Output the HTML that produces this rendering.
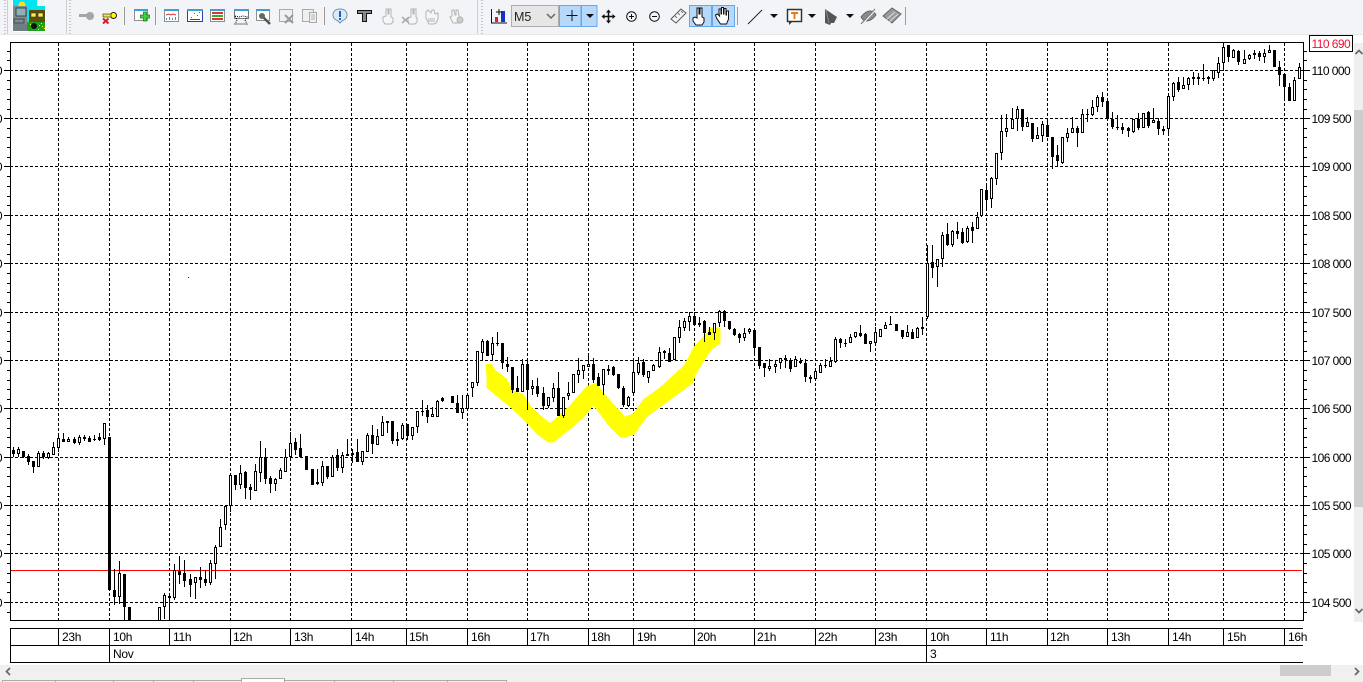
<!DOCTYPE html>
<html><head><meta charset="utf-8"><title>Chart</title>
<style>
html,body{margin:0;padding:0;background:#fff;width:1363px;height:682px;overflow:hidden}
svg{display:block;position:absolute;left:0;top:0}
text{font-family:"Liberation Sans",sans-serif;font-size:12px;fill:#000}
.p{letter-spacing:-.55px}
.t{letter-spacing:-.3px}
</style></head><body>
<svg width="1363" height="682" viewBox="0 0 1363 682" xmlns="http://www.w3.org/2000/svg">
<defs><clipPath id="c"><rect x="10" y="42" width="1293" height="578"/></clipPath></defs>
<rect width="1363" height="34" fill="#f3f4f7"/>
<rect y="34" width="1363" height="1" fill="#e7e8ea"/>

<!-- grips and separators -->
<g fill="none" stroke="#c6c6c6" stroke-width="2" stroke-dasharray="1 2">
<path d="M5 0V34M70 0V34M482 0V34"/></g>
<path d="M66.500 0V34M7.500 0V34M477.500 0V34" stroke="#cfcfcf" fill="none"/>
<path d="M124.500 7V25M155.500 7V25M324.500 7V25M737.500 7V25M905.500 7V25" stroke="#9b9b9b" fill="none"/>

<!-- logo -->
<rect x="12" y="0" width="34" height="32" fill="#fff"/>
<rect x="13" y="0" width="32" height="31" fill="#00e3f2"/>
<circle cx="22" cy="5" r="3.500" fill="#f5e11e"/>
<rect x="37" y="0" width="8" height="6" fill="#eef4f4"/>
<rect x="13" y="6" width="14" height="25" fill="#7f8b8f"/>
<rect x="16" y="8" width="10" height="8" fill="#8fb0b4" stroke="#2f4a50"/>
<rect x="14" y="19" width="10" height="4" fill="none" stroke="#3c4c50"/>
<rect x="13" y="24" width="16" height="7" fill="#6d7f82"/>
<rect x="27" y="22" width="18" height="9" fill="#1f9e1f"/>
<rect x="29" y="10" width="16" height="12" fill="#5f5008"/>
<rect x="31" y="13" width="5" height="4" fill="#f3ee55" stroke="#222" stroke-width=".5"/><rect x="38" y="13" width="5" height="4" fill="#f3ee55" stroke="#222" stroke-width=".5"/>
<circle cx="34" cy="26" r="3" fill="#111"/>
<path d="M39 25h1v1h-1zM42 26h1v1h-1zM41 23h1v1h-1zM44 28h1v1h-1zM38 29h1v1h-1zM30 24h1v1h-1z" fill="#ff0"/>

<!-- keys -->
<circle cx="90" cy="16" r="4" fill="#a6a6a6"/><rect x="79" y="14" width="8" height="3" fill="#a6a6a6"/>
<circle cx="113.500" cy="15.500" r="3" fill="#ff0" stroke="#222"/><rect x="103" y="14" width="8" height="3" fill="#ee3" stroke="#222" stroke-width=".6"/>
<path d="M103 18.500l5.500 5M108.500 18.500l-5.500 5" stroke="#d52020" stroke-width="2" fill="none"/>

<!-- window icons -->
<g fill="#fff" stroke="#8f8f8f">
<rect x="134.500" y="9.500" width="13" height="11"/>
<rect x="164.500" y="9.500" width="14" height="12"/>
<rect x="187.500" y="9.500" width="15" height="12" stroke="#2a3fb0"/>
<rect x="210.500" y="9.500" width="14" height="12"/>
<rect x="234.500" y="9.500" width="14" height="9" stroke="#777"/>
<rect x="256.500" y="9.500" width="13" height="11"/>
<rect x="279.500" y="9.500" width="13" height="12" fill="#f0f0f0" stroke="#aaa"/>
<rect x="302.500" y="9.500" width="11" height="12" fill="#f0f0f0" stroke="#aaa"/>
<rect x="309.500" y="12.500" width="7" height="10" fill="#eee" stroke="#aaa"/>
</g>
<g fill="#3c9fd6"><rect x="134" y="9" width="14" height="2"/><rect x="164" y="9" width="15" height="2"/><rect x="187" y="9" width="16" height="2"/><rect x="210" y="9" width="15" height="2"/><rect x="234" y="9" width="15" height="2"/><rect x="256" y="9" width="14" height="2"/></g>
<path d="M141 14h3v-3h3v3h3v3h-3v3h-3v-3h-3z" transform="translate(-.5 1)" fill="#3dd23d" stroke="#1b7f1b" stroke-width=".8"/>
<path d="M166 15l3-1 2 1 2-1 3 1" stroke="#d33" fill="none"/>
<path d="M166.500 20v-2M169.500 20v-3M172.500 20v-2M175.500 20v-3" stroke="#3a8fd8" fill="none"/>
<path d="M191 17h1v1h-1zM194 13h1v1h-1zM197 15h1v1h-1zM199 12h1v1h-1z" fill="#d33"/>
<rect x="190" y="19" width="10" height="1" fill="#2a3fb0"/>
<rect x="212" y="12" width="11" height="2" fill="#d63a2a"/><rect x="212" y="15" width="11" height="2" fill="#3aa83a"/><rect x="212" y="18" width="11" height="2" fill="#d63a2a"/>
<path d="M235 16l4 1 4-1 4 1-2 3 2 4h-12l2-4z" fill="none" stroke="#000" stroke-dasharray="1 1"/>
<path d="M262 16l8 8" stroke="#555" stroke-width="2.500" fill="none"/><circle cx="262" cy="16" r="3" fill="#666"/>
<path d="M285 15l8 8M293 15l-8 8" stroke="#999" stroke-width="2" fill="none"/>
<path d="M311 15h4M311 17h4M311 19h4" stroke="#bbb" fill="none"/>

<!-- info, T -->
<path d="M340 9c4.500 0 7 2.500 7 6s-3 5-5 6l-2 2-2-2c-2-1-5-2.500-5-6s2.500-6 7-6z" fill="#dbeaf8" stroke="#6c8fae"/>
<rect x="339" y="11" width="2" height="6" fill="#1560c0"/><rect x="339" y="18" width="2" height="2" fill="#1560c0"/>
<path d="M357.500 10.500h14v3h-5v8h-4v-8h-5z" fill="#8a8a8a" stroke="#111"/>

<!-- gray hands -->
<g fill="#f6f6f6" stroke="#b4b4b4">
<path d="M386 9h2v5h1V9h2v8l2 1v4l-2 2h-6l-2-3v-4l3-1z"/>
<path d="M411 9h2v5h1V9h2v8l1 1v4l-2 2h-6l-1-3v-3l3-1z"/><path d="M402 17l7 6M409 17l-7 6" stroke="#aaa" stroke-width="1.500"/>
<path d="M426 12l2-2 3 3 1-3 2 0 1 4 3-1v6l-2 4-2 1h-5l-3-6z"/><path d="M428 19h7M428 21h7" fill="none"/>
<path d="M450 17l2-1V10h2l1 5h1V10h2l1 6 2 2-1 5h-7z"/><circle cx="460" cy="20" r="3" fill="#ccc"/>
</g>

<!-- chart icon -->
<path d="M491.500 9v14H507" stroke="#111" fill="none"/>
<rect x="495" y="17" width="3" height="5" fill="#e02020"/><rect x="501" y="11" width="4" height="11" fill="#1530c8"/>
<path d="M499 9v6M496 12h6" stroke="#111" fill="none"/>

<!-- combo -->
<rect x="511.500" y="5.500" width="47" height="21" fill="#e6e6e6" stroke="#adadad"/>
<text x="514" y="21" style="font-size:12.500px;fill:#222">M5</text>
<path d="M547 14l4 4 4-4" stroke="#666" stroke-width="1.500" fill="none"/>

<!-- blue buttons -->
<g fill="#b6d8fb" stroke="#66a7e8">
<rect x="559.500" y="5.500" width="21.500" height="21"/>
<rect x="581.500" y="5.500" width="15.500" height="21"/>
<rect x="689.500" y="5.500" width="22" height="21"/>
<rect x="712.500" y="5.500" width="22" height="21"/>
</g>
<path d="M572 10v11M566.500 15.500h11" stroke="#111" fill="none"/>
<path d="M586 14h8l-4 4z" fill="#111"/>

<!-- move, zoom, ruler -->
<path d="M608.500 11v11M603 16.500h11" stroke="#111" stroke-width="1.500" fill="none"/>
<path d="M608.500 9.500l2.500 3h-5zM608.500 23.500l2.500-3h-5zM601.500 16.500l3-2.500v5zM615.500 16.500l-3-2.500v5z" fill="#111"/>
<circle cx="631.500" cy="16.500" r="4.800" fill="none" stroke="#111"/><path d="M629 16.500h5M631.500 14v5" stroke="#111" fill="none"/>
<circle cx="654.500" cy="16.500" r="4.800" fill="none" stroke="#111"/><path d="M652 16.500h5" stroke="#111" fill="none"/>
<path d="M671 19l10-10 5 4-10 10z" fill="#f6f6f6" stroke="#555"/><path d="M675 16l2 2M678 13l2 2M681 11l2 2" stroke="#777" fill="none"/>

<!-- hands active -->
<path d="M697 8h2v6h1V8h2v9l2 1v4l-2 3h-6l-3-4v-3l2-1 2 1z" fill="#fff" stroke="#111"/>
<path d="M719 13l0-4h2v5h.5V7.500h2V14h.5V8.500h2V15h.5v-4h2v8l-2 5h-6l-4-6-1-3 2-1 2 2z" fill="#fff" stroke="#111"/>

<!-- line, comment, arrows -->
<path d="M748 24l14-14" stroke="#222" fill="none"/>
<path d="M770 14h8l-4 4zM808 14h8l-4 4zM846 14h8l-4 4z" fill="#111"/>
<rect x="787.500" y="9.500" width="14" height="12" fill="#fff" stroke="#333" stroke-width="1.500"/>
<path d="M789 22v3l3-3z" fill="#333"/>
<path d="M791 12h7v2h-2.500v5h-2v-5H791z" fill="#f07810"/>
<path d="M825 9l12 8-3 6h-3l-1 2-5-2z" fill="#555"/><path d="M826 10l3 13" stroke="#888" fill="none"/>
<path d="M861 17c3-4 6-6 9-6s5 2 6 4c-3 4-6 6-9 6s-5-2-6-4z" fill="#8a8a8a" stroke="#666"/>
<path d="M862 24l13-14" stroke="#f3f4f7" stroke-width="2" fill="none"/><path d="M861 24l14-15" stroke="#777" fill="none"/>
<path d="M883 16l9-8 9 6-9 9z" fill="#999" stroke="#666"/><path d="M886 20l9-8M889 22l9-8" stroke="#ddd" fill="none"/>

<!-- scrollbars -->
<rect x="1354" y="43" width="9" height="579" fill="#efefef"/>
<rect x="1354" y="110" width="9" height="397" fill="#cdcdcd"/>
<path d="M1355.500 54l3.500-3.500 3.500 3.500" stroke="#6b6b6b" stroke-width="1.800" fill="none"/>
<path d="M1355.500 609l3.500 3.500 3.500-3.500" stroke="#6b6b6b" stroke-width="1.800" fill="none"/>
<rect x="0" y="665" width="1363" height="17" fill="#f0f0f0"/>
<rect x="1280" y="665" width="51" height="11" fill="#cdcdcd"/>
<path d="M10 668l-3.500 3.500 3.500 3.500" stroke="#6b6b6b" stroke-width="1.800" fill="none"/>
<path d="M1355 668l3.500 3.500-3.500 3.500" stroke="#6b6b6b" stroke-width="1.800" fill="none"/>
<!-- tabs -->
<path d="M2.500 682v-1.500H506.500V682M55.500 680v2M113.500 680v2M153.500 680v2M193.500 680v2M334.500 680v2M393.500 680v2M447.500 680v2" fill="none" stroke="#ababab"/>
<rect x="241.500" y="678.500" width="43" height="5" fill="#fff" stroke="#ababab"/>

<!-- chart -->
<g shape-rendering="crispEdges">
<g fill="none" stroke="#000" stroke-dasharray="3 2">
<path d="M10 70.500H1303M10 118.500H1303M10 166.500H1303M10 215.500H1303M10 263.500H1303M10 312.500H1303M10 360.500H1303M10 408.500H1303M10 457.500H1303M10 505.500H1303M10 553.500H1303M10 602.500H1303"/>
<path d="M58.500 43V620M109.500 43V620M169.500 43V620M230.500 43V620M290.500 43V620M351.500 43V620M406.500 43V620M467.500 43V620M527.500 43V620M588.500 43V620M633.500 43V620M694.500 43V620M754.500 43V620M815.500 43V620M875.500 43V620M926.500 43V620M986.500 43V620M1047.500 43V620M1107.500 43V620M1168.500 43V620M1223.500 43V620M1284.500 43V620"/>
</g>
<polygon transform="translate(470 300) scale(.33333)" fill="#ffff00" points="48,192 65,192 78,212 110,235 130,272 160,282 185,322 240,370 300,316 350,258 380,248 400,278 435,316 465,350 490,340 520,298 570,262 640,198 655,172 670,142 710,98 720,82 752,82 752,130 725,148 678,222 668,250 592,306 532,350 492,404 470,412 450,412 420,382 370,317 340,354 300,388 250,428 235,428 200,402 170,368 130,330 50,264"/>
<rect x="188" y="277" width="1" height="1" fill="#2020d0"/>
<rect x="10" y="570" width="1292" height="1" fill="#ff0000"/>

<g clip-path="url(#c)">
<!-- wicks -->
<path fill="none" stroke="#000" d="M13.500 447V457M18.500 447V457M23.500 451V458M28.500 454V465M33.500 461V473M38.500 451V467M43.500 451V459M48.500 452V459M53.500 442V455M58.500 433V452M63.500 433V442M68.500 437V442M74.500 437V444M79.500 435V445M84.500 435V441M89.500 436V442M94.500 435V441M99.500 433V441M104.500 423V445M114.500 569V605M119.500 561V604M124.500 574V620M164.500 593V619M169.500 596V620M174.500 564V600M179.500 556V584M184.500 560V587M190.500 574V597M195.500 577V599M200.500 567V588M205.500 570V586M210.500 560V585M215.500 545V579M220.500 519V547M225.500 506V530M230.500 473V512M235.500 475V490M240.500 465V489M245.500 471V499M250.500 484V500M255.500 464V491M260.500 441V482M265.500 448V484M270.500 476V493M275.500 478V491M280.500 468V479M285.500 449V472M290.500 432V457M295.500 438V455M300.500 434V457M312.500 469V485M317.500 469V485M322.500 461V486M327.500 466V479M332.500 455V477M337.500 449V471M342.500 452V473M347.500 439V456M352.500 449V463M357.500 439V462M362.500 451V465M367.500 433V452M372.500 425V454M377.500 429V445M382.500 416V436M387.500 421V433M392.500 421V444M397.500 432V446M402.500 423V440M407.500 424V440M412.500 427V440M417.500 411V433M422.500 400V416M427.500 405V423M432.500 407V417M437.500 400V417M442.500 397V402M457.500 395V413M462.500 395V419M467.500 395V410M472.500 382V397M477.500 351V386M482.500 339V361M487.500 340V356M492.500 337V360M497.500 332V346M502.500 343V369M507.500 357V372M512.500 367V393M517.500 376V392M522.500 359V392M527.500 359V410M532.500 380V395M537.500 378V397M543.500 387V410M548.500 397V408M553.500 383V402M558.500 372V416M563.500 397V418M568.500 382V400M578.500 358V383M583.500 365V379M588.500 353V367M593.500 358V383M598.500 373V386M603.500 369V395M608.500 365V375M613.500 366V376M618.500 374V389M623.500 386V407M628.500 396V407M633.500 360V393M638.500 357V375M643.500 359V377M648.500 371V383M653.500 364V371M659.500 347V368M664.500 350V359M669.500 348V362M679.500 320V343M684.500 318V331M689.500 312V331M694.500 312V325M699.500 317V327M704.500 320V342M709.500 327V335M714.500 323V340M719.500 310V327M724.500 310V327M729.500 321V330M734.500 328V336M739.500 333V343M744.500 328V341M749.500 328V334M754.500 330V356M759.500 347V369M764.500 363V377M769.500 359V371M775.500 360V373M780.500 358V369M785.500 355V368M790.500 358V372M795.500 356V367M800.500 358V364M805.500 359V382M810.500 375V383M815.500 370V381M820.500 363V373M825.500 359V368M830.500 357V367M835.500 337V363M840.500 338V348M845.500 339V347M850.500 334V343M855.500 332V338M860.500 325V337M865.500 333V344M870.500 341V352M875.500 327V343M880.500 329V337M885.500 322V329M890.500 316V325M902.500 330V339M907.500 325V337M912.500 329V339M917.500 327V338M922.500 317V335M927.500 245V319M932.500 245V278M937.500 259V287M942.500 232V267M947.500 223V246M952.500 230V247M957.500 222V239M962.500 228V244M967.500 226V243M972.500 222V243M977.500 212V229M981.500 189V217M986.500 184V210M991.500 177V208M996.500 153V185M1001.500 115V160M1006.500 114V137M1012.500 108V129M1017.500 106V131M1022.500 109V131M1027.500 117V127M1032.500 123V142M1037.500 127V139M1042.500 121V142M1047.500 120V137M1052.500 137V169M1057.500 145V167M1062.500 137V164M1067.500 128V142M1072.500 117V133M1077.500 126V147M1082.500 109V133M1087.500 109V122M1092.500 100V116M1097.500 95V112M1102.500 92V107M1107.500 101V121M1112.500 112V129M1117.500 115V130M1122.500 123V134M1128.500 127V137M1133.500 119V133M1138.500 113V130M1143.500 113V128M1148.500 111V128M1153.500 108V123M1158.500 118V135M1163.500 126V135M1168.500 96V133M1173.500 82V101M1178.500 77V92M1183.500 77V89M1188.500 77V90M1193.500 72V85M1198.500 73V85M1203.500 64V81M1208.500 76V84M1213.500 70V81M1218.500 57V78M1223.500 45V68M1228.500 45V62M1233.500 49V58M1238.500 50V65M1244.500 50V64M1249.500 54V60M1254.500 50V59M1259.500 51V61M1264.500 49V63M1269.500 45V53M1274.500 50V67M1279.500 61V86M1284.500 74V98M1289.500 83V101M1294.500 77V101M1299.500 63V79"/>
<!-- black bodies -->
<path fill="#000" d="M12 450h3V454h-3zM22 451h3V457h-3zM27 456h3V462h-3zM32 461h3V467h-3zM42 453h3V457h-3zM62 439h3V442h-3zM73 439h3V443h-3zM83 437h3V439h-3zM88 438h3V442h-3zM93 439h3V440h-3zM98 437h3V440h-3zM108 437h3V590h-3zM113 590h3V597h-3zM123 574h3V607h-3zM128 607h3V620h-3zM168 596h3V598h-3zM178 571h3V575h-3zM183 573h3V581h-3zM189 579h3V585h-3zM199 577h3V580h-3zM204 579h3V583h-3zM234 475h3V485h-3zM244 472h3V488h-3zM249 487h3V490h-3zM264 457h3V479h-3zM269 478h3V484h-3zM294 442h3V450h-3zM299 448h3V457h-3zM305 456h3V470h-3zM311 469h3V485h-3zM316 482h3V484h-3zM326 466h3V477h-3zM336 455h3V468h-3zM346 454h3V456h-3zM351 453h3V455h-3zM356 452h3V462h-3zM371 435h3V444h-3zM386 421h3V423h-3zM391 421h3V441h-3zM396 439h3V441h-3zM406 424h3V436h-3zM421 411h3V412h-3zM426 410h3V417h-3zM441 398h3V401h-3zM451 396h3V403h-3zM456 403h3V413h-3zM486 341h3V356h-3zM496 343h3V344h-3zM501 343h3V363h-3zM506 364h3V367h-3zM511 367h3V390h-3zM516 388h3V392h-3zM526 364h3V390h-3zM536 386h3V394h-3zM542 393h3V406h-3zM557 388h3V416h-3zM592 364h3V380h-3zM597 377h3V386h-3zM607 369h3V371h-3zM612 367h3V375h-3zM617 374h3V388h-3zM622 388h3V405h-3zM642 362h3V375h-3zM663 351h3V353h-3zM668 353h3V362h-3zM693 316h3V325h-3zM703 321h3V333h-3zM708 332h3V335h-3zM723 311h3V321h-3zM728 321h3V329h-3zM733 329h3V335h-3zM738 334h3V338h-3zM753 330h3V348h-3zM758 347h3V366h-3zM763 363h3V368h-3zM784 358h3V360h-3zM789 360h3V369h-3zM799 361h3V363h-3zM804 363h3V377h-3zM809 377h3V379h-3zM824 365h3V366h-3zM839 339h3V343h-3zM844 343h3V344h-3zM859 333h3V336h-3zM864 334h3V344h-3zM889 324h3V325h-3zM895 324h3V331h-3zM901 330h3V337h-3zM911 332h3V339h-3zM931 262h3V268h-3zM946 234h3V245h-3zM956 231h3V234h-3zM961 232h3V243h-3zM971 227h3V231h-3zM985 190h3V200h-3zM1021 109h3V127h-3zM1031 123h3V139h-3zM1046 125h3V137h-3zM1051 137h3V157h-3zM1056 155h3V161h-3zM1076 128h3V133h-3zM1086 114h3V115h-3zM1101 97h3V102h-3zM1106 101h3V119h-3zM1111 119h3V127h-3zM1116 127h3V128h-3zM1121 127h3V130h-3zM1127 128h3V131h-3zM1137 119h3V128h-3zM1147 112h3V126h-3zM1157 121h3V129h-3zM1162 129h3V131h-3zM1177 82h3V90h-3zM1192 77h3V79h-3zM1197 77h3V79h-3zM1202 78h3V79h-3zM1207 77h3V79h-3zM1227 45h3V57h-3zM1237 51h3V62h-3zM1253 53h3V55h-3zM1258 53h3V57h-3zM1273 50h3V67h-3zM1278 67h3V75h-3zM1283 74h3V87h-3zM1288 87h3V101h-3z"/>
<!-- hollow bodies -->
<path fill="#fff" stroke="#000" d="M17.500 449.500h2V453.500h-2zM37.500 453.500h2V466.500h-2zM47.500 453.500h2V457.500h-2zM52.500 447.500h2V454.500h-2zM57.500 438.500h2V447.500h-2zM67.500 439.500h2V441.500h-2zM78.500 437.500h2V442.500h-2zM103.500 423.500h2V438.500h-2zM118.500 573.500h2V596.500h-2zM158.500 607.500h2V621.500h-2zM163.500 595.500h2V606.500h-2zM173.500 570.500h2V597.500h-2zM194.500 577.500h2V582.500h-2zM209.500 563.500h2V582.500h-2zM214.500 547.500h2V563.500h-2zM219.500 527.500h2V546.500h-2zM224.500 506.500h2V524.500h-2zM229.500 475.500h2V505.500h-2zM239.500 473.500h2V484.500h-2zM254.500 471.500h2V490.500h-2zM259.500 457.500h2V472.500h-2zM274.500 479.500h2V483.500h-2zM279.500 470.500h2V478.500h-2zM284.500 457.500h2V471.500h-2zM289.500 443.500h2V456.500h-2zM321.500 466.500h2V482.500h-2zM331.500 457.500h2V476.500h-2zM341.500 455.500h2V467.500h-2zM361.500 451.500h2V461.500h-2zM366.500 435.500h2V451.500h-2zM376.500 436.500h2V444.500h-2zM381.500 422.500h2V435.500h-2zM401.500 425.500h2V438.500h-2zM411.500 427.500h2V435.500h-2zM416.500 411.500h2V426.500h-2zM431.500 414.500h2V416.500h-2zM436.500 401.500h2V416.500h-2zM461.500 408.500h2V412.500h-2zM466.500 395.500h2V408.500h-2zM471.500 382.500h2V387.500h-2zM476.500 351.500h2V382.500h-2zM481.500 341.500h2V352.500h-2zM491.500 343.500h2V354.500h-2zM521.500 364.500h2V391.500h-2zM531.500 386.500h2V388.500h-2zM547.500 397.500h2V405.500h-2zM552.500 388.500h2V397.500h-2zM562.500 397.500h2V415.500h-2zM567.500 393.500h2V395.500h-2zM572.500 374.500h2V392.500h-2zM577.500 370.500h2V374.500h-2zM582.500 365.500h2V370.500h-2zM587.500 364.500h2V366.500h-2zM602.500 369.500h2V384.500h-2zM627.500 397.500h2V405.500h-2zM632.500 372.500h2V392.500h-2zM637.500 363.500h2V372.500h-2zM647.500 371.500h2V377.500h-2zM652.500 365.500h2V370.500h-2zM658.500 352.500h2V366.500h-2zM673.500 337.500h2V359.500h-2zM678.500 327.500h2V337.500h-2zM683.500 321.500h2V327.500h-2zM688.500 316.500h2V321.500h-2zM698.500 323.500h2V324.500h-2zM713.500 323.500h2V332.500h-2zM718.500 311.500h2V322.500h-2zM743.500 333.500h2V337.500h-2zM748.500 329.500h2V331.500h-2zM768.500 366.500h2V368.500h-2zM774.500 364.500h2V366.500h-2zM779.500 358.500h2V362.500h-2zM794.500 359.500h2V366.500h-2zM814.500 371.500h2V378.500h-2zM819.500 365.500h2V372.500h-2zM829.500 361.500h2V366.500h-2zM834.500 339.500h2V361.500h-2zM849.500 337.500h2V342.500h-2zM854.500 332.500h2V336.500h-2zM869.500 341.500h2V343.500h-2zM874.500 332.500h2V342.500h-2zM879.500 329.500h2V336.500h-2zM884.500 325.500h2V328.500h-2zM906.500 332.500h2V336.500h-2zM916.500 328.500h2V337.500h-2zM921.500 327.500h2V328.500h-2zM926.500 263.500h2V316.500h-2zM936.500 259.500h2V266.500h-2zM941.500 235.500h2V258.500h-2zM951.500 231.500h2V244.500h-2zM966.500 228.500h2V241.500h-2zM976.500 217.500h2V228.500h-2zM980.500 189.500h2V215.500h-2zM990.500 178.500h2V198.500h-2zM995.500 153.500h2V178.500h-2zM1000.500 131.500h2V152.500h-2zM1005.500 128.500h2V131.500h-2zM1011.500 119.500h2V128.500h-2zM1016.500 109.500h2V118.500h-2zM1026.500 122.500h2V126.500h-2zM1036.500 135.500h2V138.500h-2zM1041.500 124.500h2V135.500h-2zM1061.500 137.500h2V162.500h-2zM1066.500 133.500h2V137.500h-2zM1071.500 128.500h2V132.500h-2zM1081.500 114.500h2V132.500h-2zM1091.500 107.500h2V114.500h-2zM1096.500 97.500h2V106.500h-2zM1132.500 119.500h2V131.500h-2zM1142.500 113.500h2V127.500h-2zM1152.500 120.500h2V122.500h-2zM1167.500 96.500h2V128.500h-2zM1172.500 83.500h2V96.500h-2zM1182.500 85.500h2V88.500h-2zM1187.500 78.500h2V84.500h-2zM1212.500 70.500h2V78.500h-2zM1217.500 63.500h2V72.500h-2zM1222.500 47.500h2V62.500h-2zM1232.500 50.500h2V57.500h-2zM1243.500 59.500h2V63.500h-2zM1248.500 55.500h2V58.500h-2zM1263.500 53.500h2V56.500h-2zM1268.500 50.500h2V52.500h-2zM1293.500 80.500h2V100.500h-2zM1298.500 67.500h2V78.500h-2z"/>
</g>

<!-- frame -->
<rect x="10.500" y="42.500" width="1293" height="578" fill="none" stroke="#000"/>
<!-- ticks -->
<path id="mi" stroke="#000" fill="none" d="M1304 51.500h3M1304 60.500h3M1304 80.500h3M1304 89.500h3M1304 99.500h3M1304 109.500h3M1304 128.500h3M1304 137.500h3M1304 147.500h3M1304 157.500h3M1304 176.500h3M1304 186.500h3M1304 196.500h3M1304 205.500h3M1304 225.500h3M1304 234.500h3M1304 244.500h3M1304 254.500h3M1304 273.500h3M1304 283.500h3M1304 292.500h3M1304 302.500h3M1304 322.500h3M1304 331.500h3M1304 341.500h3M1304 351.500h3M1304 370.500h3M1304 380.500h3M1304 389.500h3M1304 399.500h3M1304 418.500h3M1304 428.500h3M1304 437.500h3M1304 447.500h3M1304 467.500h3M1304 476.500h3M1304 486.500h3M1304 496.500h3M1304 515.500h3M1304 525.500h3M1304 534.500h3M1304 544.500h3M1304 563.500h3M1304 573.500h3M1304 582.500h3M1304 592.500h3M1304 612.500h3"/>
<use href="#mi" x="-1297"/>
<path id="ma" stroke="#000" fill="none" d="M1304 70.500h6M1304 118.500h6M1304 166.500h6M1304 215.500h6M1304 263.500h6M1304 312.500h6M1304 360.500h6M1304 408.500h6M1304 457.500h6M1304 505.500h6M1304 553.500h6M1304 602.500h6"/>
<use href="#ma" x="-1300"/>

<!-- time axis -->
<path fill="none" stroke="#000" d="M10 628.500H1303M10 645.500H1303M10 662.500H1303M10.500 628V663M109.500 645V662M926.500 645V662M58.500 628V645M109.500 628V645M169.500 628V645M230.500 628V645M290.500 628V645M351.500 628V645M406.500 628V645M467.500 628V645M527.500 628V645M588.500 628V645M633.500 628V645M694.500 628V645M754.500 628V645M815.500 628V645M875.500 628V645M926.500 628V645M986.500 628V645M1047.500 628V645M1107.500 628V645M1168.500 628V645M1223.500 628V645M1284.500 628V645"/>
<!-- price box -->
<rect x="1309.500" y="35.500" width="43" height="16" fill="#fff" stroke="#000"/>
</g>

<text class="p" x="1311.500" y="48" style="fill:#f01030">110 690</text>
<g class="p">
<text x="1311.500" y="75">110 000</text><text x="1311.500" y="123">109 500</text><text x="1311.500" y="171">109 000</text><text x="1311.500" y="220">108 500</text><text x="1311.500" y="268">108 000</text><text x="1311.500" y="317">107 500</text><text x="1311.500" y="365">107 000</text><text x="1311.500" y="413">106 500</text><text x="1311.500" y="462">106 000</text><text x="1311.500" y="510">105 500</text><text x="1311.500" y="558">105 000</text><text x="1311.500" y="607">104 500</text>
</g>
<g text-anchor="end" class="p">
<text x="2" y="75">110 000</text><text x="2" y="123">109 500</text><text x="2" y="171">109 000</text><text x="2" y="220">108 500</text><text x="2" y="268">108 000</text><text x="2" y="317">107 500</text><text x="2" y="365">107 000</text><text x="2" y="413">106 500</text><text x="2" y="462">106 000</text><text x="2" y="510">105 500</text><text x="2" y="558">105 000</text><text x="2" y="607">104 500</text>
</g>
<g class="t">
<text x="62" y="641">23h</text><text x="113" y="641">10h</text><text x="173" y="641">11h</text><text x="233" y="641">12h</text><text x="294" y="641">13h</text><text x="355" y="641">14h</text><text x="409" y="641">15h</text><text x="471" y="641">16h</text><text x="530" y="641">17h</text><text x="591" y="641">18h</text><text x="637" y="641">19h</text><text x="697" y="641">20h</text><text x="757" y="641">21h</text><text x="818" y="641">22h</text><text x="878" y="641">23h</text><text x="930" y="641">10h</text><text x="990" y="641">11h</text><text x="1050" y="641">12h</text><text x="1111" y="641">13h</text><text x="1172" y="641">14h</text><text x="1227" y="641">15h</text><text x="1288" y="641">16h</text>
<text x="113" y="658">Nov</text><text x="930" y="658">3</text>
</g>
</svg>
</body></html>
